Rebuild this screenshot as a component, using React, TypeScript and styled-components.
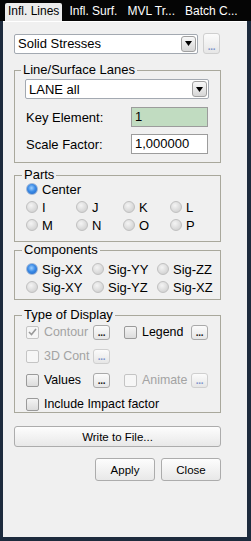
import * as React from 'react';
import styled, { createGlobalStyle } from 'styled-components';

const GlobalStyle = createGlobalStyle`
  html, body {
    margin: 0;
    padding: 0;
    background: #1d2b3d;
  }
  body {
    font-family: 'Liberation Sans', Arial, sans-serif;
  }
`;

const Window = styled.div`
  width: 251px;
  height: 541px;
  display: flex;
  flex-direction: column;
  background: #1d2b3d;
  overflow: hidden;
`;

const TabBar = styled.div`
  height: 21px;
  box-sizing: border-box;
  background: #050505;
  display: flex;
  align-items: flex-end;
  gap: 4px;
  padding-left: 5px;
`;

const Tab = styled.div<{ $active?: boolean }>`
  height: 18px;
  padding: 0 3px;
  font-size: 12px;
  line-height: 17px;
  white-space: nowrap;
  color: ${(p) => (p.$active ? '#000' : '#fff')};
  background: ${(p) => (p.$active ? '#ececec' : 'transparent')};
  border-radius: 2px 2px 0 0;
`;

const Panel = styled.div`
  flex: 1;
  margin: 0 4px 4px 3px;
  background: #f0f0f0;
  border-top: 1px solid #ffffff;
  padding: 11px 26px 0 11px;
  display: flex;
  flex-direction: column;
`;

const ComboRow = styled.div`
  display: flex;
  align-items: center;
  gap: 5px;
`;

const Combo = styled.div<{ $width: number }>`
  width: ${(p) => p.$width}px;
  height: 20px;
  box-sizing: border-box;
  border: 1px solid #a3a9b1;
  border-radius: 2px;
  background: #fff;
  display: flex;
  align-items: center;
  padding-left: 3px;
  font-size: 13px;
`;

const ComboText = styled.span`
  flex: 1;
`;

const ComboArrow = styled.span`
  width: 15px;
  height: 16px;
  box-sizing: border-box;
  margin-right: 1px;
  border: 1px solid #a0a0a0;
  border-radius: 3px;
  background: linear-gradient(#f8f8f8, #d6d6d6);
  display: flex;
  align-items: center;
  justify-content: center;
`;

const DotsButton = styled.span<{ $dim?: boolean; $tall?: boolean }>`
  width: 17px;
  height: ${(p) => (p.$tall ? 21 : 15)}px;
  box-sizing: border-box;
  border: 1px solid ${(p) => (p.$dim ? '#cfcfcf' : '#a9a9a9')};
  border-radius: 3px;
  background: linear-gradient(#fbfbfb, #e6e6e6);
  display: flex;
  align-items: flex-end;
  justify-content: center;
  padding-bottom: 1px;
  font-size: 10px;
  font-weight: bold;
  line-height: 10px;
  letter-spacing: -0.3px;
  color: ${(p) => (p.$dim ? '#7d95cc' : '#202020')};
  flex-shrink: 0;
`;

const Group = styled.fieldset<{ $top: number; $pad: string }>`
  margin: ${(p) => p.$top}px 0 0 0;
  padding: ${(p) => p.$pad};
  border: 1px solid #a9a89c;
  min-width: 0;
`;

const Legend = styled.legend`
  padding: 0 2px;
  margin-left: -4px;
  font-size: 13px;
  line-height: 12px;
  color: #000;
`;

const FieldRow = styled.div<{ $top: number }>`
  display: flex;
  align-items: center;
  height: 20px;
  margin-top: ${(p) => p.$top}px;
`;

const FieldLabel = styled.span`
  width: 105px;
  padding-left: 1px;
  font-size: 13px;
`;

const Input = styled.div<{ $green?: boolean }>`
  width: 77px;
  height: 20px;
  box-sizing: border-box;
  border: 1px solid #9c9c9c;
  background: ${(p) => (p.$green ? '#c1dcc1' : '#fff')};
  padding-left: 3px;
  font-size: 13px;
  line-height: 18px;
`;

const OptionGrid = styled.div<{ $cols: string }>`
  display: grid;
  grid-template-columns: ${(p) => p.$cols};
  grid-auto-rows: 16px;
  row-gap: 2px;
`;

const Option = styled.span<{ $dim?: boolean; $wide?: boolean }>`
  display: flex;
  align-items: center;
  gap: 4px;
  font-size: 13px;
  white-space: nowrap;
  color: ${(p) => (p.$dim ? '#a3a3a3' : '#000')};
  ${(p) => (p.$wide ? 'grid-column: 1 / -1;' : '')}
`;

const Radio = styled.span<{ $checked?: boolean }>`
  width: 12px;
  height: 12px;
  box-sizing: border-box;
  border-radius: 50%;
  border: 1px solid ${(p) => (p.$checked ? '#9fb6d6' : '#c0c0c0')};
  background: ${(p) =>
    p.$checked
      ? 'radial-gradient(circle at 45% 40%, #9fd0ff 0, #3b8be6 45%, #1d62c4 100%)'
      : 'radial-gradient(circle at 40% 35%, #f4f4f4 0, #d6d6d6 70%, #c8c8c8 100%)'};
  flex-shrink: 0;
`;

const DisplayGrid = styled.div`
  display: grid;
  grid-template-columns: 67px 31px 67px 17px;
  grid-auto-rows: 16px;
  row-gap: 8px;
  align-items: center;
`;

const Check = styled.span<{ $dim?: boolean }>`
  width: 13px;
  height: 13px;
  box-sizing: border-box;
  border: 1px solid ${(p) => (p.$dim ? '#c4c4c4' : '#9a9a9a')};
  border-radius: 2px;
  background: ${(p) => (p.$dim ? '#f6f6f6' : 'linear-gradient(#f4f4f4, #dcdcdc)')};
  display: flex;
  align-items: center;
  justify-content: center;
  flex-shrink: 0;
`;

const CheckOption = styled(Option)`
  gap: 5px;
  font-size: 12.4px;
`;

const PushButton = styled.div<{ $width?: number; $height: number; $top?: number }>`
  width: ${(p) => (p.$width ? `${p.$width}px` : 'auto')};
  height: ${(p) => p.$height}px;
  margin-top: ${(p) => p.$top ?? 0}px;
  box-sizing: border-box;
  border: 1px solid #acacac;
  border-radius: 3px;
  background: linear-gradient(#fdfdfd, #e8e8e8);
  display: flex;
  align-items: center;
  justify-content: center;
  font-size: 11.5px;
  color: #000;
`;

const ButtonRow = styled.div`
  display: flex;
  justify-content: flex-end;
  gap: 6px;
  margin-top: 11px;
`;

const DownArrow = () => (
  <svg width="7" height="5" viewBox="0 0 7 5">
    <polygon points="0,0 7,0 3.5,5" fill="#000" />
  </svg>
);

const Tick = () => (
  <svg width="9" height="8" viewBox="0 0 9 8">
    <polyline points="1,4 3.5,6.5 8,1" fill="none" stroke="#9a9a9a" strokeWidth="1.6" />
  </svg>
);

const parts = ['I', 'J', 'K', 'L', 'M', 'N', 'O', 'P'];
const components = ['Sig-XX', 'Sig-YY', 'Sig-ZZ', 'Sig-XY', 'Sig-YZ', 'Sig-XZ'];

export default function App() {
  return (
    <Window>
      <GlobalStyle />
      <TabBar>
        <Tab $active>Infl. Lines</Tab>
        <Tab>Infl. Surf.</Tab>
        <Tab>MVL Tr...</Tab>
        <Tab>Batch C...</Tab>
      </TabBar>
      <Panel>
        <ComboRow>
          <Combo $width={184}>
            <ComboText>Solid Stresses</ComboText>
            <ComboArrow>
              <DownArrow />
            </ComboArrow>
          </Combo>
          <DotsButton $dim $tall>...</DotsButton>
        </ComboRow>

        <Group $top={10} $pad="3px 11px 8px 10px">
          <Legend>Line/Surface Lanes</Legend>
          <Combo $width={184}>
            <ComboText>LANE all</ComboText>
            <ComboArrow>
              <DownArrow />
            </ComboArrow>
          </Combo>
          <FieldRow $top={8}>
            <FieldLabel>Key Element:</FieldLabel>
            <Input $green>1</Input>
          </FieldRow>
          <FieldRow $top={7}>
            <FieldLabel>Scale Factor:</FieldLabel>
            <Input>1,000000</Input>
          </FieldRow>
        </Group>

        <Group $top={6} $pad="0 10px 8px 11px">
          <Legend>Parts</Legend>
          <OptionGrid $cols="50px 47px 47px 47px">
            <Option $wide>
              <Radio $checked />
              Center
            </Option>
            {parts.map((p) => (
              <Option key={p}>
                <Radio />
                {p}
              </Option>
            ))}
          </OptionGrid>
        </Group>

        <Group $top={2} $pad="5px 10px 4px 11px">
          <Legend>Components</Legend>
          <OptionGrid $cols="66px 65px 65px">
            {components.map((c, i) => (
              <Option key={c}>
                <Radio $checked={i === 0} />
                {c}
              </Option>
            ))}
          </OptionGrid>
        </Group>

        <Group $top={9} $pad="3px 10px 0 11px">
          <Legend>Type of Display</Legend>
          <DisplayGrid>
            <CheckOption $dim>
              <Check $dim>
                <Tick />
              </Check>
              Contour
            </CheckOption>
            <DotsButton>...</DotsButton>
            <CheckOption>
              <Check />
              Legend
            </CheckOption>
            <DotsButton>...</DotsButton>

            <CheckOption $dim>
              <Check $dim />
              3D Cont
            </CheckOption>
            <DotsButton $dim>...</DotsButton>
            <span />
            <span />

            <CheckOption>
              <Check />
              Values
            </CheckOption>
            <DotsButton>...</DotsButton>
            <CheckOption $dim>
              <Check $dim />
              Animate
            </CheckOption>
            <DotsButton $dim>...</DotsButton>

            <CheckOption $wide>
              <Check />
              Include Impact factor
            </CheckOption>
          </DisplayGrid>
        </Group>

        <PushButton $height={21} $top={13}>
          Write to File...
        </PushButton>
        <ButtonRow>
          <PushButton $width={60} $height={23}>
            Apply
          </PushButton>
          <PushButton $width={60} $height={23}>
            Close
          </PushButton>
        </ButtonRow>
      </Panel>
    </Window>
  );
}
